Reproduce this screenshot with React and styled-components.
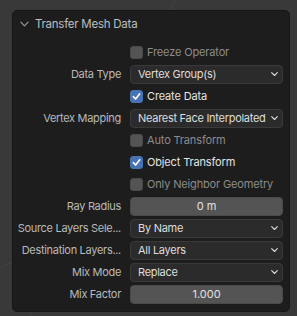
import React from 'react';
import styled, { createGlobalStyle } from 'styled-components';

const Global = createGlobalStyle`
  html, body {
    margin: 0;
    background: #393939;
    font-family: Inter, "DejaVu Sans", sans-serif;
    font-size: 11px;
    -webkit-font-smoothing: antialiased;
  }
`;

const Viewport = styled.div`
  position: relative;
  width: 297px;
  height: 316px;
  overflow: hidden;
  padding: 10px 0 0 12px;
  box-sizing: border-box;
`;

const Grid = styled.svg`
  position: absolute;
  left: 0;
  top: 0;
  pointer-events: none;
`;

const Panel = styled.div`
  position: relative;
  width: 278px;
  box-sizing: border-box;
  background: #1d1d1d;
  border: 1px solid #161616;
  border-radius: 5px;
  padding: 0 6px 6px 0;
`;

const Header = styled.div`
  display: flex;
  align-items: center;
  height: 25px;
  padding-left: 7px;
  gap: 6px;
  color: #bfbfbf;
  font-size: 11.5px;
  letter-spacing: -0.25px;
  margin-bottom: 5px;
`;

const Rows = styled.div`
  display: grid;
  grid-template-columns: minmax(0, 1fr) 153px;
  column-gap: 9px;
  grid-auto-rows: 22px;
  align-items: center;
`;

const Label = styled.div`
  text-align: right;
  color: #bababa;
  white-space: nowrap;
  letter-spacing: -0.3px;
`;

const Dropdown = styled.div`
  height: 19px;
  box-sizing: border-box;
  background: #2b2b2b;
  border: 1px solid #3a3a3a;
  border-radius: 4px;
  display: flex;
  align-items: center;
  justify-content: space-between;
  padding: 0 4px 0 7px;
  color: #dedede;
  white-space: nowrap;
  overflow: hidden;
  letter-spacing: -0.28px;
`;

const NumberField = styled.div`
  height: 19px;
  box-sizing: border-box;
  background: #545454;
  border: 1px solid #4a4a4a;
  border-radius: 4px;
  display: flex;
  align-items: center;
  justify-content: center;
  color: #e2e2e2;
`;

const Check = styled.div`
  grid-column: 2;
  display: flex;
  align-items: center;
  gap: 4px;
  color: ${p => (p.$on ? '#e4e4e4' : '#8c8c8c')};
  white-space: nowrap;
  letter-spacing: -0.15px;
`;

const Box = styled.span`
  flex: none;
  width: 13px;
  height: 13px;
  box-sizing: border-box;
  border-radius: 3px;
  background: ${p => (p.$on ? '#4772b3' : '#545454')};
  border: 1px solid ${p => (p.$on ? '#4772b3' : '#4a4a4a')};
  display: flex;
  align-items: center;
  justify-content: center;
`;

const Chevron = ({ color = '#d8d8d8', size = 7 }) => (
  <svg width={size} height={size * 0.6} viewBox="0 0 10 6" style={{ flex: 'none' }}>
    <path d="M1 1 L5 5 L9 1" fill="none" stroke={color} strokeWidth="1.6" strokeLinecap="round" strokeLinejoin="round" />
  </svg>
);

const CheckBox = ({ on, children }) => (
  <Check $on={on}>
    <Box $on={on}>
      {on && (
        <svg width="9" height="9" viewBox="0 0 10 10">
          <path d="M1.5 5.2 L4 7.8 L8.6 2" fill="none" stroke="#fff" strokeWidth="1.8" strokeLinecap="round" strokeLinejoin="round" />
        </svg>
      )}
    </Box>
    {children}
  </Check>
);

const Select = ({ value }) => (
  <Dropdown>
    <span>{value}</span>
    <Chevron />
  </Dropdown>
);

export default function App() {
  return (
    <>
      <Global />
      <Viewport>
        <Grid width="297" height="316">
          <line x1="170" y1="10" x2="176" y2="-2" stroke="#444" strokeWidth="1" />
          <line x1="0" y1="268" x2="12" y2="262" stroke="#444" strokeWidth="1" />
          <line x1="30" y1="316" x2="34" y2="311" stroke="#444" strokeWidth="1" />
        </Grid>
        <Panel>
          <Header>
            <svg width="9" height="6" viewBox="0 0 10 6">
              <path d="M1 1 L5 5 L9 1" fill="none" stroke="#9a9a9a" strokeWidth="1.3" strokeLinecap="round" strokeLinejoin="round" />
            </svg>
            Transfer Mesh Data
          </Header>
          <Rows>
            <CheckBox>Freeze Operator</CheckBox>
            <Label>Data Type</Label>
            <Select value="Vertex Group(s)" />
            <CheckBox on>Create Data</CheckBox>
            <Label>Vertex Mapping</Label>
            <Select value="Nearest Face Interpolated" />
            <CheckBox>Auto Transform</CheckBox>
            <CheckBox on>Object Transform</CheckBox>
            <CheckBox>Only Neighbor Geometry</CheckBox>
            <Label>Ray Radius</Label>
            <NumberField>0 m</NumberField>
            <Label>Source Layers Sele...</Label>
            <Select value="By Name" />
            <Label>Destination Layers...</Label>
            <Select value="All Layers" />
            <Label>Mix Mode</Label>
            <Select value="Replace" />
            <Label>Mix Factor</Label>
            <NumberField>1.000</NumberField>
          </Rows>
        </Panel>
      </Viewport>
    </>
  );
}
